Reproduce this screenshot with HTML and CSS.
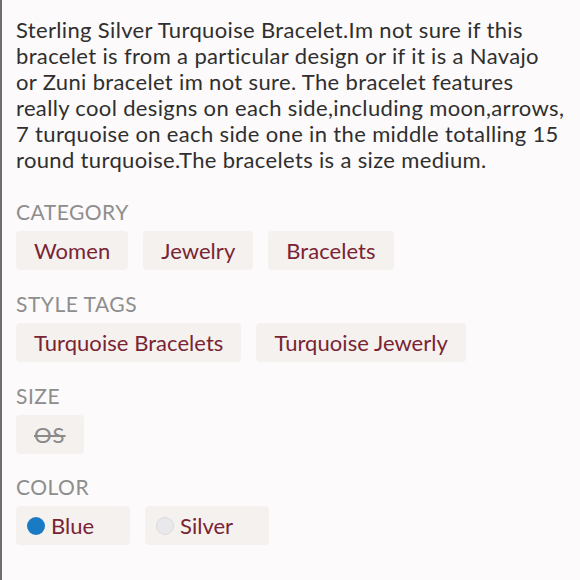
FILE: index.html
```html
<!DOCTYPE html>
<html>
<head>
<meta charset="utf-8">
<link rel="stylesheet" href="styles.css">
</head>
<body>
<div class="page">
  <p class="desc">Sterling Silver Turquoise Bracelet.Im not sure if this
bracelet is from a particular design or if it is a Navajo
or Zuni bracelet im not sure. The bracelet features
really cool designs on each side,including moon,arrows,
7 turquoise on each side one in the middle totalling 15
round turquoise.The bracelets is a size medium.</p>

  <section class="group">
    <h3 class="label">CATEGORY</h3>
    <div class="chips">
      <span class="chip">Women</span>
      <span class="chip">Jewelry</span>
      <span class="chip">Bracelets</span>
    </div>
  </section>

  <section class="group">
    <h3 class="label">STYLE TAGS</h3>
    <div class="chips">
      <span class="chip">Turquoise Bracelets</span>
      <span class="chip">Turquoise Jewerly</span>
    </div>
  </section>

  <section class="group">
    <h3 class="label">SIZE</h3>
    <div class="chips">
      <span class="chip chip-size">OS</span>
    </div>
  </section>

  <section class="group group-last">
    <h3 class="label">COLOR</h3>
    <div class="chips">
      <span class="chip chip-color"><span class="dot dot-blue"></span>Blue</span>
      <span class="chip chip-color"><span class="dot dot-silver"></span>Silver</span>
    </div>
  </section>
</div>
</body>
</html>
```

FILE: styles.css
```css
html, body {
  margin: 0;
  padding: 0;
  background: #fcfafa;
}
body {
  font-family: "Lato", "Open Sans", sans-serif;
  width: 580px;
  height: 580px;
  overflow: hidden;
}
.page {
  box-sizing: border-box;
  height: 580px;
  border-left: 2px solid #6e6e6e;
  padding: 17px 10px 0 14px;
}
.desc {
  margin: 0;
  font-size: 22px;
  line-height: 26px;
  letter-spacing: 0.35px;
  color: #2f2f2f;
  white-space: pre-line;
}
.group {
  margin-top: 27px;
}
.group + .group {
  margin-top: 22px;
}
.group + .group-last {
  margin-top: 21px;
}
.label {
  margin: 0;
  font-size: 21px;
  line-height: 24px;
  font-weight: 400;
  color: #8e8e8e;
  letter-spacing: 0.5px;
}
.chips {
  display: flex;
  gap: 15px;
  margin-top: 7px;
}
.chip {
  display: inline-flex;
  align-items: center;
  height: 39px;
  box-sizing: border-box;
  padding: 0 18px;
  background: #f4f1ef;
  border-radius: 4px;
  color: #7a2433;
  font-size: 22px;
  letter-spacing: 0.05px;
}
.chip-size {
  color: #8a8a8a;
  text-decoration: line-through;
  letter-spacing: 1px;
}
.chip-color {
  padding: 0 36px 0 11px;
  gap: 6px;
  letter-spacing: 0;
}
.dot {
  width: 18px;
  height: 18px;
  border-radius: 50%;
  box-sizing: border-box;
}
.dot-blue {
  background: #1b7ac4;
}
.dot-silver {
  background: #e9e9eb;
  border: 1px solid #dcdcde;
}
```
